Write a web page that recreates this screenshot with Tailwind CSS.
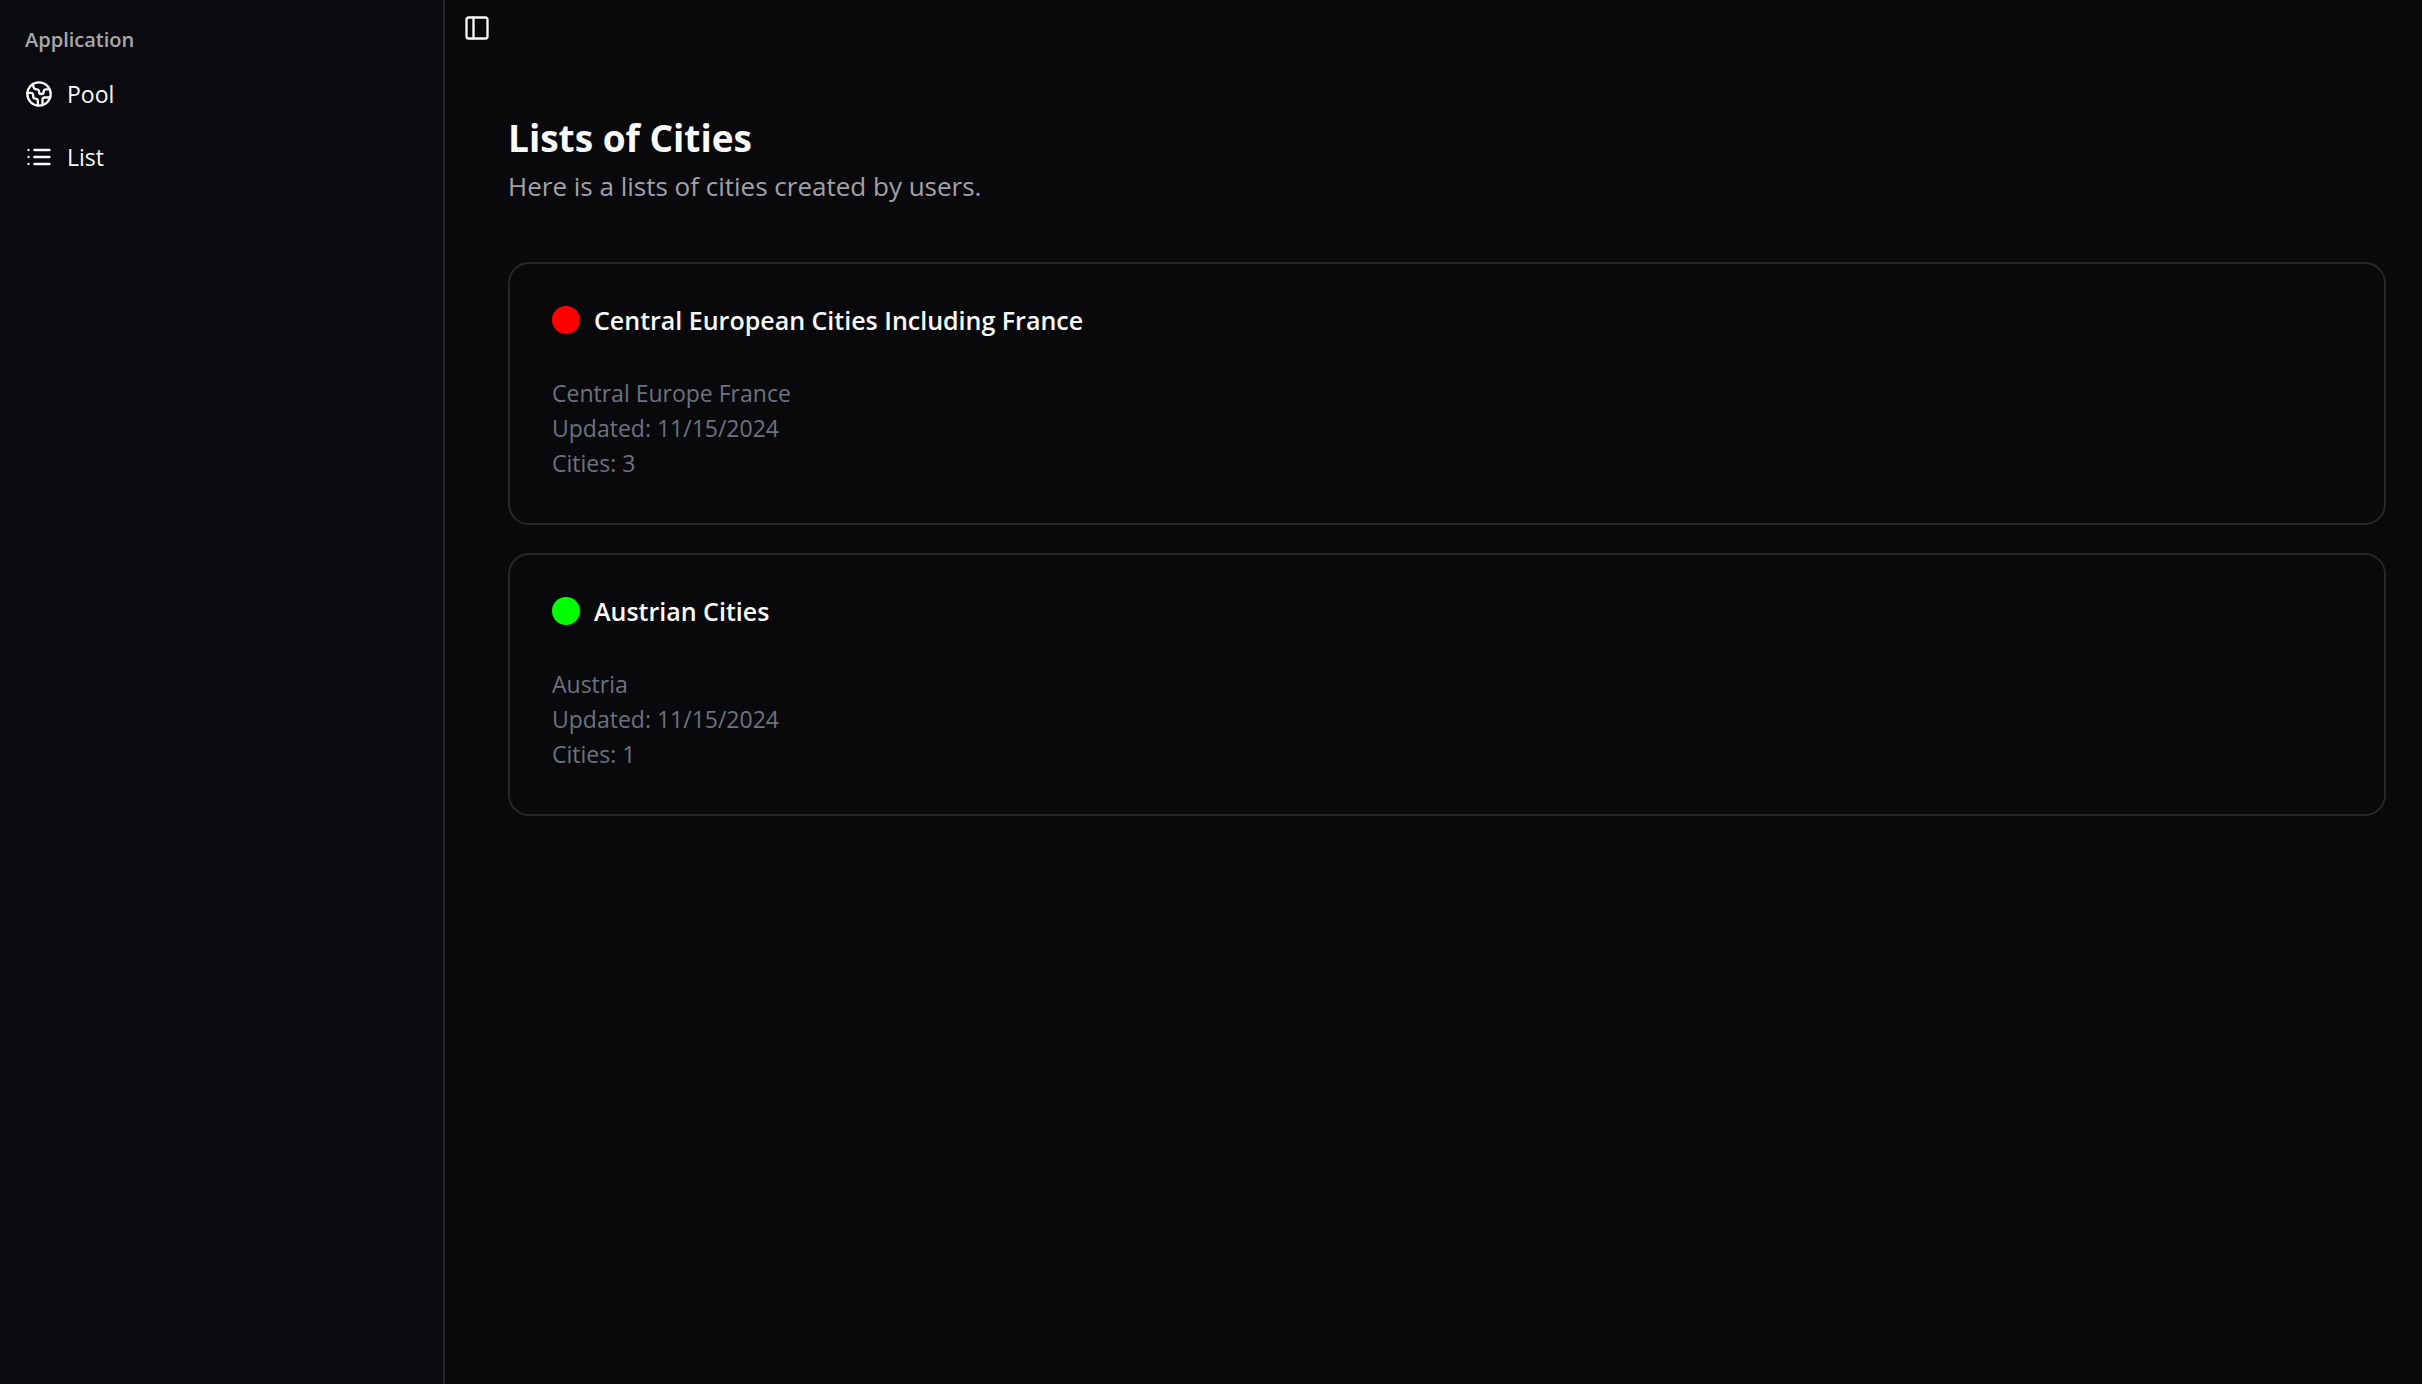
<!DOCTYPE html>
<html lang="en">
<head>
<meta charset="utf-8">
<meta name="viewport" content="width=device-width, initial-scale=1">
<title>Lists of Cities</title>
<script src="https://cdn.jsdelivr.net/npm/@tailwindcss/browser@4"></script>
</head>
<body class="flex min-h-screen bg-[#09090b] font-['Segoe_UI','Open_Sans',sans-serif] text-[#fafafa]">
  <aside class="w-[445px] shrink-0 border-r-2 border-[#27272a] bg-[#0a0a0f] p-[14px]">
    <h2 class="flex h-[52px] items-center px-[11px] text-[20px] font-semibold text-[#a8a8ab]">Application</h2>
    <nav aria-label="Application">
      <ul class="flex flex-col gap-[7px]">
        <li>
          <a href="#pool" class="flex h-14 items-center gap-[14px] px-[11px] text-[23px]">
            <svg class="size-7" viewBox="0 0 24 24" fill="none" stroke="currentColor" stroke-width="2" stroke-linecap="round" stroke-linejoin="round" aria-hidden="true"><path d="M21.54 15H17a2 2 0 0 0-2 2v4.54"/><path d="M7 3.34V5a3 3 0 0 0 3 3a2 2 0 0 1 2 2c0 1.1.9 2 2 2a2 2 0 0 0 2-2c0-1.1.9-2 2-2h3.17"/><path d="M11 21.95V18a2 2 0 0 0-2-2a2 2 0 0 1-2-2v-1a2 2 0 0 0-2-2H2.05"/><circle cx="12" cy="12" r="10"/></svg>
            <span>Pool</span>
          </a>
        </li>
        <li>
          <a href="#list" class="flex h-14 items-center gap-[14px] px-[11px] text-[23px]">
            <svg class="size-7" viewBox="0 0 24 24" fill="none" stroke="currentColor" stroke-width="2" stroke-linecap="round" stroke-linejoin="round" aria-hidden="true"><path d="M3 12h.01"/><path d="M3 18h.01"/><path d="M3 6h.01"/><path d="M8 12h13"/><path d="M8 18h13"/><path d="M8 6h13"/></svg>
            <span>List</span>
          </a>
        </li>
      </ul>
    </nav>
  </aside>

  <main class="min-w-0 flex-1">
    <button type="button" aria-label="Toggle Sidebar" class="flex h-14 w-16 items-center justify-center">
      <svg class="size-7" viewBox="0 0 24 24" fill="none" stroke="currentColor" stroke-width="2" stroke-linecap="round" stroke-linejoin="round" aria-hidden="true"><rect width="18" height="18" x="3" y="3" rx="2"/><path d="M9 3v18"/></svg>
    </button>
    <div class="pt-14 pr-9 pl-[63px]">
      <h1 class="text-[37px] leading-[52px] font-bold">Lists of Cities</h1>
      <p class="text-[26px] leading-[44px] text-[#a1a1aa]">Here is a lists of cities created by users.</p>

      <div class="mt-[54px] flex flex-col gap-7">
        <article class="rounded-[21px] border-2 border-[#27272a] p-[42px]">
          <h2 class="flex items-center gap-[14px] text-[25px] leading-7 font-semibold">
            <span class="size-7 rounded-full bg-[#ff0000]"></span>
            Central European Cities Including France
          </h2>
          <div class="mt-[42px] text-[23px] leading-[35px] text-[#6b7280]">
            <p>Central Europe France</p>
            <p>Updated: 11/15/2024</p>
            <p>Cities: 3</p>
          </div>
        </article>
        <article class="rounded-[21px] border-2 border-[#27272a] p-[42px]">
          <h2 class="flex items-center gap-[14px] text-[25px] leading-7 font-semibold">
            <span class="size-7 rounded-full bg-[#00ff00]"></span>
            Austrian Cities
          </h2>
          <div class="mt-[42px] text-[23px] leading-[35px] text-[#6b7280]">
            <p>Austria</p>
            <p>Updated: 11/15/2024</p>
            <p>Cities: 1</p>
          </div>
        </article>
      </div>
    </div>
  </main>
</body>
</html>
